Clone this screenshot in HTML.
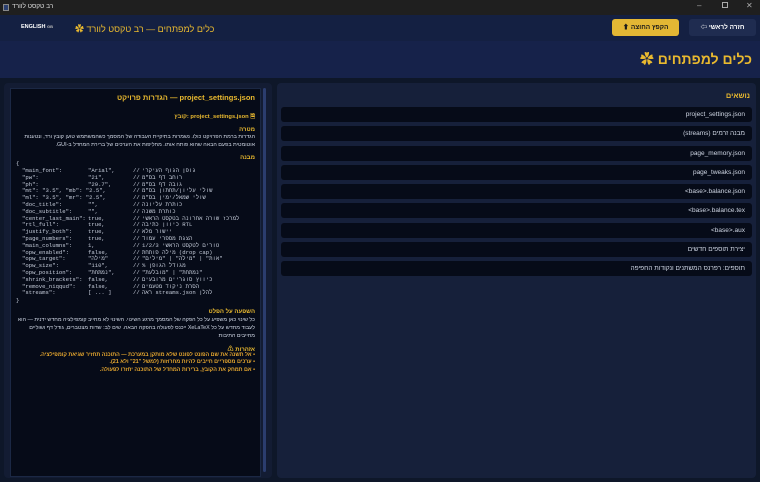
<!DOCTYPE html>
<html><head><meta charset="utf-8"><style>
*{margin:0;padding:0;box-sizing:border-box}
body{width:760px;height:482px;overflow:hidden;background:#0e1729;font-family:"Liberation Sans","Noto Sans CJK SC",sans-serif;position:relative;color:#cfd6e4}
.a{position:absolute;white-space:nowrap}
.y{color:#e9b92f;font-weight:bold}
.mono{font-family:"Liberation Mono","DejaVu Sans Mono",monospace;font-size:5.6px;color:#c4cbd9}
.item{position:absolute;left:281px;width:471px;height:15px;background:#060b18;border-radius:3px;font-size:6.5px;color:#cfd6e4;text-align:right;padding-right:7px;line-height:15px}
.p{font-size:5.4px;color:#cfd6e4;direction:rtl;text-align:right}
.w{font-size:5.4px;color:#e9a92f;direction:rtl;text-align:right;font-weight:bold;width:238px;overflow:hidden}
</style></head><body>
<div class="a" style="left:0;top:0;width:760px;height:15px;background:#1f1f1f"></div>
<div class="a" style="left:3px;top:4px;width:6px;height:7px;background:#2a3f70;border:1px solid #888"></div>
<div class="a" style="left:12px;top:3px;font-size:6.5px;color:#ddd">רב טקסט לוורד</div>
<div class="a" style="left:697px;top:1px;font-size:8px;color:#aaa">–</div>
<div class="a" style="left:722px;top:2px;width:6px;height:6px;border:1px solid #aaa"></div>
<div class="a" style="left:746px;top:1px;font-size:8px;color:#aaa">✕</div>
<div class="a" style="left:0;top:15px;width:760px;height:26px;background:#142042"></div>
<div class="a" style="left:0;top:41px;width:760px;height:37px;background:#16224a"></div>
<div class="a" style="left:21px;top:24px;font-size:5.5px;font-weight:bold;color:#fff">ENGLISH <span style="font-size:4px;color:#bbb">GB</span></div>
<div class="a" style="left:75px;top:22px;font-size:9px;color:#e9b92f"><span>✿</span> כלים למפתחים — רב טקסט לוורד</div>
<div class="a" style="left:612px;top:19px;width:67px;height:17px;background:#e3b734;border-radius:3px;font-size:6.5px;font-weight:bold;color:#1a1a1a;text-align:center;line-height:17px">⬆ הקפץ החוצה</div>
<div class="a" style="left:689px;top:19px;width:67px;height:17px;background:#1f2c50;border-radius:3px;font-size:6.5px;font-weight:bold;color:#fff;text-align:center;line-height:17px">⇦ חזרה לראשי</div>
<div class="a" style="right:8px;top:49px;font-size:14px;font-weight:bold;color:#e9b92f;direction:rtl">כלים למפתחים ✿</div>

<div class="a" style="left:4px;top:83px;width:268px;height:395px;background:#131c33;border-radius:4px"></div>
<div class="a" style="left:10px;top:88px;width:251px;height:389px;background:#060b18;border:1px solid #1b2844"></div>
<div class="a" style="left:263px;top:88px;width:3px;height:384px;background:#2b3d6e;border-radius:2px"></div>

<div class="a y" style="right:505px;top:93px;font-size:7.5px">הגדרות פרויקט — project_settings.json</div>
<div class="a y" style="right:505px;top:112px;font-size:5.8px">קובץ: project_settings.json 🗎</div>
<div class="a y" style="right:505px;top:127px;font-size:6px">מטרה</div>
<div class="a p" style="right:505px;top:134px;width:238px;white-space:normal;line-height:7.5px">הגדרות ברמת הפרויקט כולו. נשמרות בתיקיית העבודה של המסמך כשהמשתמש טוען קובץ ורד, ונטענות אוטומטית בפעם הבאה שהוא פותח אותו. מחליפות את הערכים של ברירת המחדל ב-GUI.</div>
<div class="a y" style="right:505px;top:155px;font-size:6px">מבנה</div>
<div class="a mono" style="left:16px;top:160px">{</div>
<div id="code"></div>
<div class="a mono" style="left:16px;top:297px">}</div>
<div class="a y" style="right:505px;top:309px;font-size:6px">השפעה על הפלט</div>
<div class="a p" style="right:505px;top:316px;width:238px;white-space:normal;line-height:8px">כל שינוי כאן משפיע על כל הפקה של המסמך מרגע השינוי. השינוי לא מחייב קומפילציה מחדש ידנית — הוא לעבוד מחדש על כל XeLaTeX ייכנס לפעולה בהפקה הבאה. שים לב: שדות מצטברים, גודל דף ושוליים מחייבים התיבות</div>
<div class="a y" style="right:505px;top:344px;font-size:6px">⚠ אזהרות</div>
<div class="a w" style="right:505px;top:352px">• אל תשנה את שם הפונט לפונט שלא מותקן במערכת — התוכנה תחזיר שגיאת קומפילציה.</div>
<div class="a w" style="right:505px;top:359px">• ערכים מספריים חייבים להיות מחרוזות (למשל "21" ולא 21).</div>
<div class="a w" style="right:505px;top:367px">• אם תמחק את הקובץ, ברירות המחדל של התוכנה יחזרו לפעולה.</div>

<div class="a" style="left:277px;top:83px;width:479px;height:395px;background:#16203a;border-radius:4px"></div>
<div class="a y" style="right:10px;top:91px;font-size:7.5px">נושאים</div>
<div class="item" style="top:107px">project_settings.json</div>
<div class="item" style="top:126px">(streams) מבנה זרמים</div>
<div class="item" style="top:146px">page_memory.json</div>
<div class="item" style="top:165px">page_tweaks.json</div>
<div class="item" style="top:184px">&lt;base&gt;.balance.json</div>
<div class="item" style="top:203px">&lt;base&gt;.balance.tex</div>
<div class="item" style="top:223px">&lt;base&gt;.aux</div>
<div class="item" style="top:242px">יצירת תוספים חדשים</div>
<div class="item" style="top:261px">תוספים: רפרנס המשתנים ונקודות החפיפה</div>
<script>
var L=[['"main_font":','"Arial",','גופן הגוף העיקרי'],['"pw":','"21",','רוחב דף בס"מ'],['"ph":','"29.7",','גובה דף בס"מ'],['"mt": "3.5", "mb": "2.5",','','שולי עליון/תחתון בס"מ'],['"ml": "3.5", "mr": "2.5",','','שולי שמאל/ימין בס"מ'],['"doc_title":','"",','כותרת עליונה'],['"doc_subtitle":','"",','כותרת משנה'],['"center_last_main":','true,','למרכז שורה אחרונה בטקסט הראשי'],['"rtl_full":','true,','כיוון כתיבה RTL'],['"justify_both":','true,','יישור מלא'],['"page_numbers":','true,','הצגת מספרי עמוד'],['"main_columns":','1,','טורים לטקסט הראשי 1/2/3'],['"opw_enabled":','false,','מילה פותחת (drop cap)'],['"opw_target":','"מילה"','"אות" | "מילה" | "מילים"'],['"opw_size":','"110",','% מגודל הגופן'],['"opw_position":','"נמתחת",','"נמתחת" | "מובלעת"'],['"shrink_brackets":','false,','כיווץ סוגריים מרובעים'],['"remove_niqqud":','false,','הסרת ניקוד מטעמים'],['"streams":','[ ... ]','ראה streams.json להלן']];
var h='';L.forEach(function(r,i){var t=167+i*6.8;h+='<div class="a mono" style="left:22px;top:'+t+'px">'+r[0]+'</div><div class="a mono" style="left:88px;top:'+t+'px">'+r[1]+'</div><div class="a mono" style="left:133px;top:'+t+'px">//</div><div class="a mono" style="left:142px;top:'+t+'px">'+r[2]+'</div>';});
document.getElementById('code').innerHTML=h;
</script>
</body></html>
